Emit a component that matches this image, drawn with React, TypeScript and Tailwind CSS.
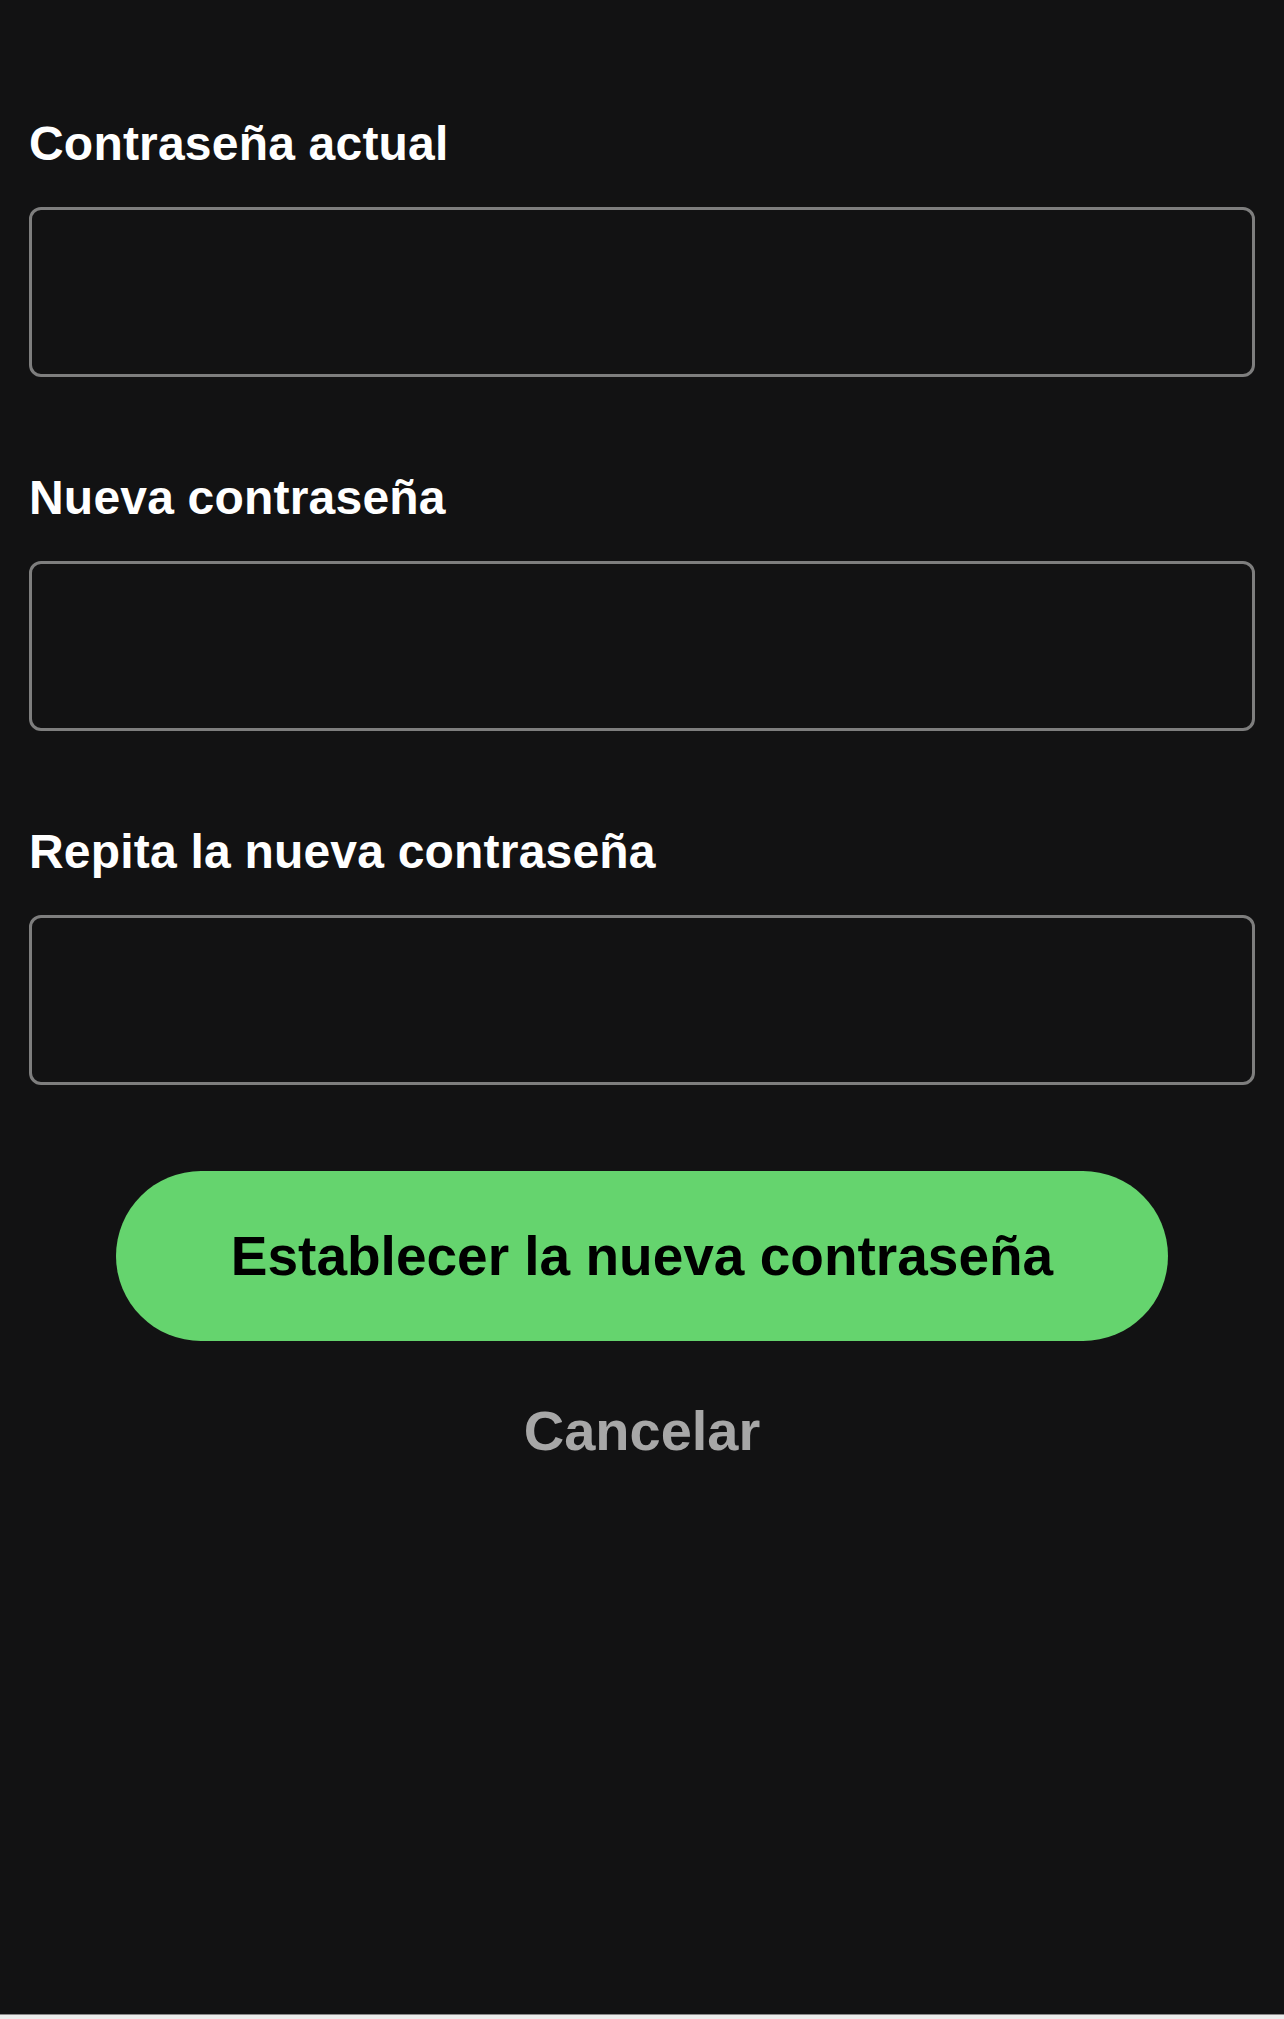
const fields = ['Contraseña actual', 'Nueva contraseña', 'Repita la nueva contraseña']

export default function App() {
  return (
    <div
      className="flex h-[2019px] w-full flex-col bg-[#121213]"
      style={{ fontFamily: '"Liberation Sans", Arial, sans-serif' }}
    >
      <div className="flex flex-1 flex-col px-[29px] pt-[120px]">
        {fields.map((label, i) => (
          <div key={label} className={i > 0 ? 'mt-[97px]' : ''}>
            <label className="mb-[40px] block text-[48px] font-bold leading-[47px] tracking-[0.2px] text-white">
              {label}
            </label>
            <input
              type="password"
              className="block h-[170px] w-full rounded-[12px] border-[3px] border-[#7e7e7e] bg-[#121213] px-6 text-[40px] text-white outline-none"
            />
          </div>
        ))}

        <button className="mx-auto mt-[86px] flex h-[170px] w-[1052px] items-center justify-center rounded-full bg-[#65d46e] text-[55px] font-bold leading-[55px] text-black">
          Establecer la nueva contraseña
        </button>

        <button className="mx-auto mt-[62px] text-[56px] font-bold leading-[55px] text-[#a7a7a7]">
          Cancelar
        </button>
      </div>

      <div className="h-[1px] bg-[#8a8a8a]" />
      <div className="h-[4px] bg-[#ececec]" />
    </div>
  )
}
